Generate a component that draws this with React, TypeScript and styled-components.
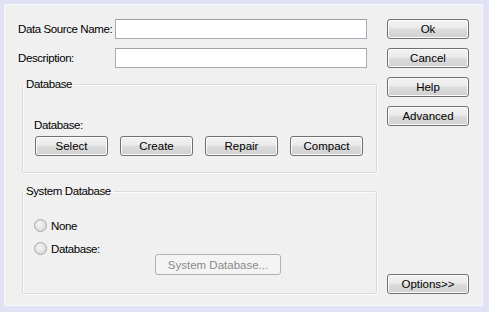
import React from 'react';
import styled, { createGlobalStyle } from 'styled-components';

const GlobalStyle = createGlobalStyle`
  html, body {
    margin: 0;
    padding: 0;
    background: #e2e2f6;
  }
  body {
    font-family: 'Liberation Sans', Arial, sans-serif;
    font-size: 11.5px;
    letter-spacing: -0.4px;
    color: #000;
  }
`;

const Frame = styled.div`
  width: 489px;
  height: 312px;
  box-sizing: border-box;
  padding: 4px 6px 6px 4px;
  background: #e2e2f6;
`;

const Dialog = styled.div`
  height: 100%;
  box-sizing: border-box;
  background: #f0f0f0;
  border: 1px solid #f8f8fb;
  display: flex;
  gap: 10px;
  padding: 14px 12px 11px 13px;
`;

const MainColumn = styled.div`
  width: 359px;
  display: flex;
  flex-direction: column;
`;

const SideColumn = styled.div`
  width: 82px;
  display: flex;
  flex-direction: column;
  gap: 9px;
`;

const FieldRow = styled.div`
  display: flex;
  align-items: center;
  height: 20px;
  margin-bottom: 9px;
`;

const Label = styled.label`
  width: 97px;
  flex-shrink: 0;
  white-space: nowrap;
`;

const TextInput = styled.input`
  width: 252px;
  height: 20px;
  box-sizing: border-box;
  border: 1px solid #a5acb5;
  border-top-color: #9aa0a8;
  background: #fff;
  padding: 0 3px;
  font: inherit;
  outline: none;
`;

const Group = styled.fieldset<{ $height: number; $gap: number }>`
  margin: ${p => p.$gap}px 0 0 4px;
  padding: 0;
  height: ${p => p.$height}px;
  box-sizing: border-box;
  border: 1px solid #dadada;
  border-radius: 2px;
  box-shadow: inset 1px 1px 0 #fbfbfb, 1px 1px 0 #fbfbfb;
  min-width: 0;
`;

const Legend = styled.legend`
  padding: 0 3px;
  margin-left: 0;
  line-height: 14px;
`;

const GroupBody = styled.div<{ $top: number }>`
  padding: ${p => p.$top}px 0 0 11px;
`;

const ButtonRow = styled.div`
  display: flex;
  gap: 12px;
  margin-top: 5px;
  padding-left: 1px;
`;

const Button = styled.button<{ $width?: number; $tall?: boolean }>`
  width: ${p => p.$width ?? 82}px;
  height: ${p => (p.$tall ? 21 : 20)}px;
  box-sizing: border-box;
  padding: 0;
  font: inherit;
  color: #000;
  border: 1px solid #707070;
  border-radius: 3px;
  background: linear-gradient(#f2f2f2 0%, #ebebeb 45%, #dddddd 50%, #cfcfcf 100%);
  box-shadow: inset 0 0 0 1px #fcfcfc;
  cursor: default;

  &:disabled {
    color: #8a8a8a;
    border-color: #adb2b5;
    background: #f4f4f4;
    box-shadow: none;
  }
`;

const BottomButton = styled(Button)`
  margin-top: auto;
`;

const RadioList = styled.div`
  display: flex;
  flex-direction: column;
  gap: 10px;
`;

const RadioRow = styled.div`
  display: flex;
  align-items: center;
  gap: 4px;
  height: 13px;
`;

const RadioDot = styled.span`
  width: 11px;
  height: 11px;
  border-radius: 50%;
  border: 1px solid #a9a9a9;
  background: radial-gradient(circle at 45% 40%, #f6f6f6 0%, #e2e2e2 55%, #cfcfcf 100%);
  flex-shrink: 0;
`;

const DisabledWrap = styled.div`
  padding-left: 121px;
  margin-top: -1px;
`;

const App: React.FC = () => {
  return (
    <>
      <GlobalStyle />
      <Frame>
        <Dialog>
          <MainColumn>
            <FieldRow>
              <Label>Data Source Name:</Label>
              <TextInput />
            </FieldRow>
            <FieldRow>
              <Label>Description:</Label>
              <TextInput />
            </FieldRow>

            <Group $height={96} $gap={0}>
              <Legend>Database</Legend>
              <GroupBody $top={28}>
                <div>Database:</div>
                <ButtonRow>
                  <Button $width={73}>Select</Button>
                  <Button $width={73}>Create</Button>
                  <Button $width={73}>Repair</Button>
                  <Button $width={73}>Compact</Button>
                </ButtonRow>
              </GroupBody>
            </Group>

            <Group $height={110} $gap={11}>
              <Legend>System Database</Legend>
              <GroupBody $top={21}>
                <RadioList>
                  <RadioRow>
                    <RadioDot />
                    None
                  </RadioRow>
                  <RadioRow>
                    <RadioDot />
                    Database:
                  </RadioRow>
                </RadioList>
                <DisabledWrap>
                  <Button $width={126} $tall disabled>System Database...</Button>
                </DisabledWrap>
              </GroupBody>
            </Group>
          </MainColumn>

          <SideColumn>
            <Button>Ok</Button>
            <Button>Cancel</Button>
            <Button>Help</Button>
            <Button>Advanced</Button>
            <BottomButton>Options&gt;&gt;</BottomButton>
          </SideColumn>
        </Dialog>
      </Frame>
    </>
  );
};

export default App;
